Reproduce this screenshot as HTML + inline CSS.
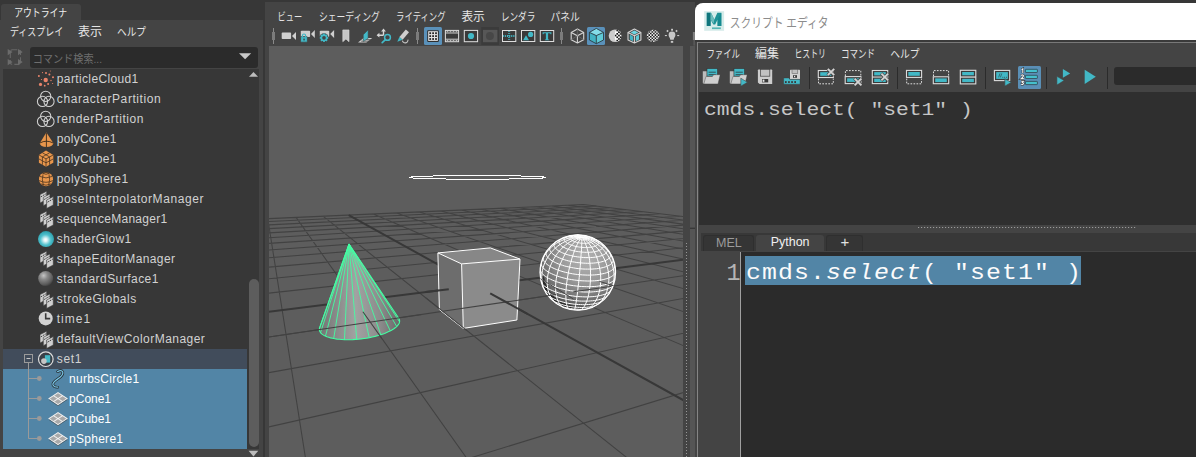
<!DOCTYPE html>
<html lang="ja">
<head>
<meta charset="utf-8">
<title>Maya - Outliner / Viewport / Script Editor</title>
<style>
html,body{margin:0;padding:0;}
body{width:1196px;height:457px;overflow:hidden;position:relative;background:#373737;
  font-family:"Liberation Sans",sans-serif;font-size:12px;color:#d2d2d2;}
.abs{position:absolute;}
/* ---------- outliner ---------- */
#ol-tab{left:1px;top:4px;width:80px;height:17px;background:#444;border-radius:3px 3px 0 0;}
#ol-panel{left:0;top:20px;width:263px;height:437px;background:#444;}
#ol-search{left:30px;top:47px;width:228px;height:21px;background:#2b2b2b;border-radius:3px;}
#ol-list{left:3px;top:69px;width:256px;height:380px;background:#373737;overflow:hidden;}
#ol-thumb{left:249px;top:279px;width:10px;height:168px;background:#5d5d5d;border-radius:5px;}
.row{position:absolute;left:0;width:244px;height:20px;line-height:20px;white-space:nowrap;}
.row span{position:absolute;top:0;letter-spacing:0;}
.row.hl{background:#414c5b;}
.row.sel{background:#5285a6;color:#fff;}
/* ---------- viewport ---------- */
#vp-panel{left:265px;top:2px;width:430px;height:455px;background:#444;}
#vp-strip{left:690px;top:46px;width:5.2px;height:411px;background:#555;}
#vp-view{left:269px;top:46px;width:414px;height:411px;background:#5d5d5d;overflow:hidden;}
/* ---------- script editor ---------- */
#se-win{left:695px;top:3px;width:501px;height:454px;background:#444;border-radius:8px 0 0 0;overflow:hidden;}
#se-title{left:0;top:0;width:501px;height:37px;background:#fff;}
#se-b1{left:0;top:37px;width:501px;height:2.3px;background:#3a3a3a;}
#se-b2{left:1.8px;top:39.3px;width:500px;height:1px;background:#787878;}
#se-lb{left:0;top:39px;width:2px;height:420px;background:#444;}
#se-lb2{left:1.8px;top:39.3px;width:1.4px;height:420px;background:#858585;}
#se-field{left:419px;top:64px;width:90px;height:18px;background:#2b2b2b;border-radius:3px;}
#se-hist{left:4px;top:89px;width:497px;height:132.7px;background:#2f2f2f;}
#se-hist span{position:absolute;left:5.2px;top:7px;font-family:"Liberation Mono",monospace;font-size:18.6px;letter-spacing:0;line-height:24px;color:#c6c6c6;white-space:pre;transform:scaleX(1.147);transform-origin:0 0;}
#se-tabs{left:6px;top:229.6px;width:495px;height:18.4px;background:#383838;}
.tab{position:absolute;top:2.6px;height:15.8px;line-height:15.4px;text-align:center;font-size:12.5px;border-radius:3px 3px 0 0;box-sizing:border-box;}
#se-gutter{left:3px;top:249px;width:42px;height:210px;background:#444;}
#se-gline{left:45px;top:249px;width:1px;height:210px;background:#a0a0a0;}
#se-code{left:46px;top:249px;width:455px;height:210px;background:#2b2b2b;}
#se-sel{left:50px;top:253px;width:336px;height:29px;background:#5285a6;}
.code{font-family:"Liberation Mono",monospace;font-size:21.6px;letter-spacing:0.953px;line-height:30px;white-space:pre;color:#fbfbfb;}
#se-ln{left:3px;top:255.5px;width:43.5px;text-align:right;color:#b4b4b4;font-size:23.5px;}
#se-txt{left:50.8px;top:254.6px;transform:scaleX(1.15);transform-origin:0 0;}
svg.layer{position:absolute;left:0;top:0;width:1196px;height:457px;pointer-events:none;overflow:visible;}
svg.layer text{font-family:"Liberation Sans","Noto Sans CJK JP",sans-serif;}
</style>
</head>
<body>

<!-- ================= OUTLINER ================= -->
<div class="abs" id="ol-tab"></div>
<div class="abs" id="ol-panel"></div>
<div class="abs" id="ol-search"></div>
<div class="abs" id="ol-list">
  <div class="row " style="top:0px"><span style="left:53.8px;letter-spacing:0.368px">particleCloud1</span></div>
  <div class="row " style="top:20px"><span style="left:53.8px;letter-spacing:0.580px">characterPartition</span></div>
  <div class="row " style="top:40px"><span style="left:53.8px;letter-spacing:0.570px">renderPartition</span></div>
  <div class="row " style="top:60px"><span style="left:53.8px;letter-spacing:0.278px">polyCone1</span></div>
  <div class="row " style="top:80px"><span style="left:53.8px;letter-spacing:0.278px">polyCube1</span></div>
  <div class="row " style="top:100px"><span style="left:53.8px;letter-spacing:0.391px">polySphere1</span></div>
  <div class="row " style="top:120px"><span style="left:53.8px;letter-spacing:0.568px">poseInterpolatorManager</span></div>
  <div class="row " style="top:140px"><span style="left:53.8px;letter-spacing:0.288px">sequenceManager1</span></div>
  <div class="row " style="top:160px"><span style="left:53.8px;letter-spacing:0.378px">shaderGlow1</span></div>
  <div class="row " style="top:180px"><span style="left:53.8px;letter-spacing:0.400px">shapeEditorManager</span></div>
  <div class="row " style="top:200px"><span style="left:53.8px;letter-spacing:0.458px">standardSurface1</span></div>
  <div class="row " style="top:220px"><span style="left:53.8px;letter-spacing:0.502px">strokeGlobals</span></div>
  <div class="row " style="top:240px"><span style="left:53.8px;letter-spacing:0.989px">time1</span></div>
  <div class="row " style="top:260px"><span style="left:53.8px;letter-spacing:0.461px">defaultViewColorManager</span></div>
  <div class="row hl" style="top:280px"><span style="left:53.8px;letter-spacing:0.638px">set1</span></div>
  <div class="row sel" style="top:300px"><span style="left:66.1px;letter-spacing:0.249px">nurbsCircle1</span></div>
  <div class="row sel" style="top:320px"><span style="left:66.1px;letter-spacing:-0.029px">pCone1</span></div>
  <div class="row sel" style="top:340px"><span style="left:66.1px;letter-spacing:-0.029px">pCube1</span></div>
  <div class="row sel" style="top:360px"><span style="left:66.1px;letter-spacing:0.265px">pSphere1</span></div>
</div>
<div class="abs" id="ol-thumb"></div>

<!-- ================= VIEWPORT ================= -->
<div class="abs" id="vp-panel"></div>
<div class="abs" id="vp-strip"></div>
<div class="abs" id="vp-view">
<svg width="414" height="411" viewBox="269 46 414 411" style="position:absolute;left:0;top:0">
<defs>
<linearGradient id="vpbg" x1="0" y1="0" x2="0" y2="1"><stop offset="0" stop-color="#5c5c5c"/><stop offset="1" stop-color="#5f5f5f"/></linearGradient>
</defs>
<path d="M-70.1 233.8L583.3 204.6M-70.1 233.8L-4536.4 1156.1M-94.3 238.8L596.2 206.1M-23.1 231.7L-3986.1 1156.9M-122.3 244.5L610.2 207.8M21.1 229.7L-3435.8 1157.7M-155.1 251.3L625.3 209.6M62.6 227.8L-2885.5 1158.5M-194.0 259.3L641.9 211.6M101.8 226.1L-2335.1 1159.3M-241.1 269.1L660.0 213.8M138.7 224.4L-1784.8 1160.1M-299.0 281.0L679.9 216.2M173.6 222.9L-1234.5 1160.9M-372.1 296.1L701.8 218.8M206.7 221.4L-684.2 1161.7M-467.3 315.8L726.2 221.7M238.0 220.0L-133.8 1162.6M-596.2 342.4L753.5 225.0M267.8 218.7L416.5 1163.4M-780.6 380.5L784.1 228.7M296.1 217.4L966.8 1164.2M-1066.5 439.5L818.8 232.9M323.0 216.2L1517.1 1165.0M-2685.1 773.8L904.1 243.1M373.2 214.0L2617.8 1166.6M-4113.8 1156.7L957.2 249.5M396.5 212.9L3168.1 1167.4M-2964.2 1158.4L1019.9 257.0M418.9 211.9L3718.4 1168.2M-1814.5 1160.1L1095.0 266.0M440.3 211.0L4268.8 1169.0M-664.8 1161.8L1186.6 277.0M460.8 210.1L4819.1 1169.8M484.9 1163.5L1300.7 290.7M480.5 209.2L5369.4 1170.7M1634.6 1165.2L1446.8 308.2M499.3 208.3L5919.7 1171.5M2784.3 1166.8L1640.6 331.5M517.5 207.5L6470.1 1172.3M3934.0 1168.5L1910.0 363.8M534.9 206.7L7020.4 1173.1M5083.7 1170.2L2310.0 411.9M551.6 206.0L6550.1 1033.1M6233.4 1171.9L2965.9 490.6M567.8 205.3L5058.6 781.7M7383.1 1173.6L4238.6 643.4M583.3 204.6L4238.6 643.4" stroke="#424242" stroke-width="1.05" fill="none"/>
<path d="M-1569.0 543.3L858.4 237.6M348.7 215.1L2067.5 1165.8" stroke="#383838" stroke-width="2" fill="none"/>
<defs>
<linearGradient id="gcone" x1="319" y1="0" x2="400" y2="0" gradientUnits="userSpaceOnUse">
<stop offset="0" stop-color="#737373"/><stop offset="0.45" stop-color="#a2a2a2"/><stop offset="0.75" stop-color="#8c8c8c"/><stop offset="1" stop-color="#686868"/></linearGradient>
<radialGradient id="gsph" cx="585" cy="258" r="56" gradientUnits="userSpaceOnUse">
<stop offset="0" stop-color="#b4b4b4"/><stop offset="0.45" stop-color="#989898"/><stop offset="0.8" stop-color="#6a6a6a"/><stop offset="1" stop-color="#2c2c2c"/></radialGradient>
<clipPath id="csph"><circle cx="577.8" cy="272.5" r="38"/></clipPath>
</defs>
<path d="M433 175h88v1h-88zM411 176h22v1h-22zM521 176h23v1h-23zM409 177h4v1h-4zM542 177h4v1h-4zM413 178h33v1h-33zM509 178h34v1h-34zM446 179h63v1h-63z" fill="#fff" shape-rendering="crispEdges"/>
<path d="M349.0 244.1L399.1 318.8L399.5 319.7L399.6 320.7L399.6 321.7L399.4 322.7L398.9 323.7L398.3 324.7L397.5 325.7L396.4 326.8L395.2 327.8L393.9 328.8L392.3 329.8L390.6 330.7L388.7 331.6L386.7 332.5L384.6 333.4L382.3 334.2L379.9 335.0L377.4 335.7L374.9 336.4L372.2 337.0L369.5 337.6L366.8 338.1L364.0 338.5L361.1 338.9L358.3 339.2L355.5 339.4L352.7 339.6L349.9 339.7L347.2 339.7L344.5 339.7L341.9 339.5L339.5 339.3L337.1 339.1L334.8 338.7L332.6 338.3L330.6 337.9L328.7 337.3L326.9 336.8L325.4 336.1L324.0 335.4L322.7 334.6L321.7 333.9L320.8 333.0L320.2 332.1L319.7 331.2L319.4 330.3L319.4 329.3L319.5 328.3Z" fill="url(#gcone)"/>
<path d="M349.0 244.1L399.6 321.9M349.0 244.1L396.7 326.5M349.0 244.1L390.3 330.9M349.0 244.1L380.8 334.7M349.0 244.1L369.2 337.6M349.0 244.1L356.7 339.3M349.0 244.1L344.5 339.7M349.0 244.1L333.7 338.6M349.0 244.1L325.5 336.1M349.0 244.1L320.5 332.7M349.0 244.1L319.4 328.5" stroke="#43ffa3" stroke-width="0.9" fill="none"/>
<path d="M349.0 244.1L399.1 318.8L399.5 319.7L399.6 320.7L399.6 321.7L399.4 322.7L398.9 323.7L398.3 324.7L397.5 325.7L396.4 326.8L395.2 327.8L393.9 328.8L392.3 329.8L390.6 330.7L388.7 331.6L386.7 332.5L384.6 333.4L382.3 334.2L379.9 335.0L377.4 335.7L374.9 336.4L372.2 337.0L369.5 337.6L366.8 338.1L364.0 338.5L361.1 338.9L358.3 339.2L355.5 339.4L352.7 339.6L349.9 339.7L347.2 339.7L344.5 339.7L341.9 339.5L339.5 339.3L337.1 339.1L334.8 338.7L332.6 338.3L330.6 337.9L328.7 337.3L326.9 336.8L325.4 336.1L324.0 335.4L322.7 334.6L321.7 333.9L320.8 333.0L320.2 332.1L319.7 331.2L319.4 330.3L319.4 329.3L319.5 328.3Z" stroke="#43ffa3" stroke-width="1.1" fill="none" stroke-linejoin="round"/>
<polygon points="437.9,252.9 490.3,247.9 520.0,259.1 461.6,263.9" fill="#878787"/>
<polygon points="437.9,252.9 461.6,263.9 463.3,328.4 439.4,309.6" fill="#6d6d6d"/>
<polygon points="461.6,263.9 520.0,259.1 516.9,320.0 463.3,328.4" fill="#8b8b8b"/>
<path d="M437.9,252.9 490.3,247.9 520.0,259.1 516.9,320.0 463.3,328.4 439.4,309.6Z M437.9,252.9 461.6,263.9 520.0,259.1 M461.6,263.9 463.3,328.4" stroke="#fff" stroke-width="1" fill="none" stroke-linejoin="round"/>
<circle cx="577.8" cy="272.5" r="38.0" fill="url(#gsph)"/>
<path d="M542.6 277.5A35.4 35.4 0 0 0 573.5 307.6" fill="none" stroke="#1c1c1c" stroke-width="3.2" stroke-linecap="round" opacity="0.75"/>
<path d="M573.5 310.0L574.7 310.2L575.9 310.3L577.1 310.3L578.3 310.3L579.4 310.3L580.6 310.3L581.7 310.2L582.7 310.2L583.7 310.0L584.7 309.9L585.6 309.7M561.8 307.0L562.7 307.4L563.6 307.7L564.5 308.1L565.6 308.4L566.6 308.7L567.7 309.0L568.8 309.3L570.0 309.5L571.1 309.7L572.3 309.9L573.5 310.0M573.6 309.0L575.2 309.1L576.7 309.2L578.3 309.3L579.8 309.4L581.3 309.4L582.7 309.3L584.2 309.2L585.5 309.1L586.9 308.9L588.1 308.7L589.3 308.5L590.4 308.2L591.5 307.9L592.4 307.6L593.3 307.2M554.9 302.8L555.6 303.4L556.5 303.9L557.5 304.5L558.5 305.0L559.6 305.5L560.8 306.0L562.0 306.4L563.3 306.9L564.7 307.3L566.1 307.6L567.6 308.0L569.1 308.3L570.6 308.5L572.1 308.8L573.6 309.0M573.9 307.0L575.7 307.2L577.6 307.3L579.4 307.4L581.3 307.5L583.1 307.5L584.8 307.4L586.5 307.3L588.2 307.1L589.8 307.0L591.3 306.7L592.7 306.4L594.1 306.1L595.3 305.7L596.5 305.3L597.5 304.8L598.5 304.4L599.3 303.8M549.8 298.2L550.5 298.9L551.3 299.6L552.2 300.3L553.3 300.9L554.4 301.6L555.6 302.2L557.0 302.8L558.4 303.4L559.9 303.9L561.5 304.4L563.1 304.9L564.8 305.4L566.6 305.8L568.3 306.2L570.2 306.5L572.0 306.8L573.9 307.0M574.2 304.2L576.3 304.4L578.5 304.5L580.6 304.6L582.7 304.7L584.7 304.7L586.7 304.6L588.7 304.5L590.6 304.3L592.4 304.1L594.1 303.8L595.8 303.5L597.3 303.1L598.7 302.7L600.1 302.2L601.3 301.7L602.3 301.1L603.3 300.5L604.1 299.9M546.0 293.3L546.7 294.1L547.4 294.9L548.4 295.7L549.4 296.5L550.6 297.2L551.9 298.0L553.3 298.7L554.9 299.4L556.5 300.0L558.2 300.7L560.0 301.2L561.9 301.8L563.8 302.3L565.8 302.8L567.9 303.2L570.0 303.6L572.1 303.9L574.2 304.2M574.6 300.6L577.0 300.8L579.3 301.0L581.6 301.1L583.9 301.1L586.2 301.1L588.4 301.1L590.6 300.9L592.6 300.8L594.6 300.5L596.5 300.2L598.4 299.8L600.1 299.4L601.6 298.9L603.1 298.4L604.4 297.8L605.6 297.2L606.7 296.6L607.5 295.9L608.3 295.1L608.9 294.4M542.6 286.8L543.0 287.7L543.6 288.6L544.3 289.5L545.1 290.3L546.2 291.2L547.3 292.1L548.6 292.9L550.1 293.7L551.6 294.5L553.3 295.3L555.1 296.0L557.0 296.7L559.0 297.3L561.0 298.0L563.2 298.5L565.4 299.0L567.6 299.5L569.9 299.9L572.3 300.3L574.6 300.6M575.1 296.3L577.6 296.5L580.1 296.7L582.6 296.8L585.0 296.9L587.5 296.9L589.8 296.8L592.1 296.7L594.3 296.5L596.5 296.2L598.5 295.9L600.4 295.5L602.3 295.0L604.0 294.5L605.5 294.0L606.9 293.4L608.2 292.7L609.3 292.0L610.3 291.3L611.0 290.5L611.7 289.7L612.1 288.8M540.7 280.7L540.9 281.6L541.4 282.5L542.0 283.5L542.7 284.4L543.6 285.4L544.7 286.3L546.0 287.2L547.4 288.1L548.9 289.0L550.6 289.8L552.4 290.6L554.3 291.4L556.3 292.1L558.4 292.8L560.6 293.5L562.9 294.1L565.3 294.6L567.7 295.1L570.1 295.6L572.6 295.9L575.1 296.3M575.6 291.4L578.3 291.6L580.9 291.8L583.4 292.0L586.0 292.0L588.5 292.0L590.9 292.0L593.3 291.8L595.6 291.6L597.9 291.3L600.0 291.0L602.0 290.6L603.9 290.1L605.6 289.6L607.2 289.0L608.7 288.4L610.0 287.7L611.2 287.0L612.2 286.2L613.0 285.4L613.6 284.5L614.1 283.6M539.9 275.2L540.2 276.2L540.6 277.1L541.2 278.1L542.0 279.1L543.0 280.1L544.1 281.0L545.4 282.0L546.8 282.9L548.4 283.8L550.2 284.7L552.0 285.5L554.0 286.3L556.1 287.1L558.3 287.8L560.6 288.5L563.0 289.1L565.4 289.7L567.9 290.2L570.5 290.7L573.1 291.0L575.6 291.4M576.3 286.0L578.9 286.3L581.5 286.5L584.1 286.6L586.7 286.7L589.3 286.7L591.7 286.6L594.2 286.5L596.5 286.3L598.7 286.0L600.9 285.6L602.9 285.2L604.8 284.8L606.6 284.2L608.2 283.6L609.7 283.0L611.1 282.3L612.2 281.6L613.2 280.8L614.1 279.9L614.7 279.1L615.2 278.2L615.5 277.3M540.0 268.7L540.1 269.6L540.4 270.6L540.8 271.6L541.4 272.6L542.2 273.6L543.2 274.6L544.3 275.5L545.6 276.5L547.1 277.4L548.7 278.4L550.5 279.2L552.4 280.1L554.4 280.9L556.5 281.7L558.7 282.4L561.0 283.1L563.4 283.7L565.9 284.3L568.4 284.8L571.0 285.3L573.6 285.7L576.3 286.0M576.9 280.3L579.5 280.6L582.1 280.8L584.7 280.9L587.2 281.0L589.8 281.0L592.2 280.9L594.6 280.8L596.9 280.6L599.1 280.3L601.2 280.0L603.2 279.6L605.1 279.1L606.9 278.6L608.5 278.0L610.0 277.3L611.3 276.7L612.4 275.9L613.4 275.2L614.2 274.3L614.9 273.5L615.4 272.6L615.6 271.7L615.7 270.8M541.2 262.3L541.1 263.2L541.2 264.2L541.4 265.1L541.9 266.1L542.5 267.1L543.3 268.1L544.2 269.0L545.4 270.0L546.7 270.9L548.1 271.9L549.7 272.8L551.4 273.6L553.3 274.5L555.3 275.3L557.4 276.1L559.6 276.8L561.9 277.5L564.2 278.1L566.7 278.7L569.2 279.2L571.7 279.6L574.3 280.0L576.9 280.3M577.6 274.5L580.1 274.7L582.6 274.9L585.1 275.0L587.5 275.1L589.9 275.1L592.3 275.0L594.6 274.9L596.8 274.7L599.0 274.4L601.0 274.1L602.9 273.7L604.7 273.3L606.4 272.8L608.0 272.2L609.4 271.6L610.7 270.9L611.8 270.2L612.7 269.5L613.5 268.7L614.1 267.9L614.6 267.0L614.9 266.1L615.0 265.2L614.9 264.3M543.5 256.2L543.2 257.1L543.1 258.0L543.2 258.9L543.4 259.8L543.8 260.8L544.4 261.7L545.2 262.6L546.1 263.6L547.2 264.5L548.5 265.4L549.8 266.3L551.4 267.2L553.0 268.0L554.8 268.8L556.7 269.6L558.8 270.4L560.9 271.0L563.1 271.7L565.4 272.3L567.7 272.8L570.1 273.3L572.6 273.8L575.1 274.2L577.6 274.5M578.2 268.6L580.6 268.8L582.9 269.0L585.3 269.1L587.6 269.1L589.8 269.1L592.1 269.1L594.2 268.9L596.3 268.8L598.3 268.5L600.2 268.2L602.0 267.8L603.7 267.4L605.3 266.9L606.7 266.4L608.1 265.8L609.3 265.2L610.3 264.6L611.2 263.9L611.9 263.1L612.5 262.4L612.9 261.6L613.2 260.7L613.3 259.9L613.2 259.0L613.0 258.2M546.7 250.6L546.3 251.4L546.1 252.2L546.0 253.1L546.0 253.9L546.3 254.8L546.6 255.7L547.2 256.6L547.9 257.5L548.8 258.3L549.8 259.2L551.0 260.1L552.3 260.9L553.7 261.7L555.3 262.5L556.9 263.3L558.7 264.0L560.6 264.7L562.6 265.3L564.7 266.0L566.8 266.5L569.0 267.0L571.3 267.5L573.6 267.9L575.9 268.3L578.2 268.6M578.9 262.7L581.0 262.9L583.2 263.1L585.3 263.2L587.4 263.3L589.4 263.3L591.4 263.2L593.4 263.1L595.3 262.9L597.1 262.7L598.8 262.4L600.5 262.1L602.0 261.7L603.5 261.3L604.8 260.8L606.0 260.3L607.1 259.7L608.0 259.1L608.8 258.5L609.5 257.8L610.0 257.1L610.4 256.4L610.6 255.6L610.7 254.9L610.7 254.1L610.5 253.3L610.1 252.5M550.8 245.8L550.3 246.5L549.9 247.2L549.7 247.9L549.6 248.7L549.7 249.5L549.9 250.3L550.2 251.1L550.7 251.9L551.4 252.7L552.2 253.5L553.1 254.2L554.1 255.0L555.3 255.8L556.6 256.5L558.0 257.2L559.6 257.9L561.2 258.6L562.9 259.2L564.7 259.8L566.6 260.4L568.5 260.9L570.5 261.3L572.6 261.8L574.7 262.1L576.8 262.5L578.9 262.7M579.5 257.1L581.4 257.3L583.3 257.5L585.1 257.6L587.0 257.6L588.7 257.6L590.5 257.6L592.2 257.5L593.9 257.3L595.5 257.1L597.0 256.9L598.4 256.6L599.8 256.2L601.0 255.9L602.2 255.4L603.2 255.0L604.2 254.5L605.0 254.0L605.7 253.4L606.3 252.8L606.7 252.2L607.1 251.6L607.3 250.9L607.4 250.3L607.3 249.6L607.1 248.9L606.8 248.2L606.4 247.5L605.8 246.8M556.3 241.2L555.6 241.7L555.0 242.3L554.5 242.9L554.2 243.6L554.0 244.2L553.9 244.9L554.0 245.6L554.2 246.2L554.5 246.9L554.9 247.6L555.5 248.3L556.2 249.0L557.0 249.7L557.9 250.4L558.9 251.1L560.1 251.7L561.3 252.3L562.6 252.9L564.1 253.5L565.6 254.1L567.1 254.6L568.8 255.1L570.5 255.5L572.2 255.9L574.0 256.3L575.8 256.6L577.7 256.9L579.5 257.1M580.1 251.9L581.7 252.1L583.2 252.2L584.8 252.3L586.3 252.3L587.8 252.3L589.2 252.3L590.7 252.2L592.0 252.1L593.4 251.9L594.6 251.7L595.8 251.5L596.9 251.2L598.0 250.9L598.9 250.5L599.8 250.1L600.6 249.7L601.3 249.3L601.9 248.8L602.4 248.4L602.7 247.9L603.0 247.3L603.2 246.8L603.3 246.2L603.2 245.7L603.1 245.1L602.8 244.5L602.4 243.9L602.0 243.3L601.4 242.8L600.7 242.2L600.0 241.6M563.2 237.4L562.3 237.8L561.5 238.2L560.8 238.7L560.2 239.1L559.7 239.6L559.4 240.1L559.1 240.6L558.9 241.2L558.8 241.7L558.9 242.3L559.0 242.9L559.3 243.5L559.7 244.0L560.1 244.6L560.7 245.2L561.4 245.8L562.1 246.3L563.0 246.9L564.0 247.4L565.0 247.9L566.1 248.5L567.3 248.9L568.5 249.4L569.8 249.8L571.2 250.2L572.6 250.6L574.1 250.9L575.5 251.2L577.1 251.5L578.6 251.7L580.1 251.9M580.7 247.2L581.9 247.4L583.1 247.4L584.3 247.5L585.4 247.5L586.6 247.5L587.7 247.5L588.8 247.4L589.9 247.3L590.9 247.2L591.9 247.1L592.8 246.9L593.6 246.7L594.5 246.4L595.2 246.1L595.9 245.9L596.5 245.5L597.0 245.2L597.5 244.8L597.8 244.5L598.1 244.1L598.4 243.7L598.5 243.3L598.5 242.8L598.5 242.4L598.4 242.0L598.2 241.5L597.9 241.1L597.5 240.6L597.1 240.2L596.6 239.7L596.0 239.3L595.3 238.9L594.6 238.4L593.8 238.0L592.9 237.6M570.9 235.1L570.0 235.3L569.1 235.5L568.3 235.8L567.6 236.0L566.9 236.3L566.3 236.6L565.7 237.0L565.3 237.3L564.9 237.7L564.6 238.1L564.4 238.5L564.3 238.9L564.2 239.4L564.3 239.8L564.4 240.2L564.6 240.7L564.9 241.1L565.2 241.6L565.7 242.0L566.2 242.5L566.8 242.9L567.4 243.3L568.2 243.8L569.0 244.2L569.8 244.5L570.7 244.9L571.7 245.3L572.7 245.6L573.8 245.9L574.9 246.2L576.0 246.5L577.1 246.7L578.3 246.9L579.5 247.1L580.7 247.2M581.1 243.2L582.0 243.2L582.8 243.3L583.6 243.3L584.4 243.4L585.2 243.4L585.9 243.3L586.7 243.3L587.4 243.2L588.1 243.1L588.8 243.0L589.4 242.9L590.0 242.8L590.5 242.6L591.0 242.4L591.5 242.2L591.9 242.0L592.3 241.8L592.6 241.5L592.8 241.3L593.0 241.0L593.2 240.7L593.3 240.5L593.3 240.2L593.3 239.9L593.2 239.6L593.1 239.3L592.9 238.9L592.6 238.6L592.3 238.3L592.0 238.0L591.6 237.7L591.1 237.5L590.6 237.2L590.1 236.9L589.5 236.6L588.9 236.4L588.2 236.1L587.5 235.9L586.8 235.7L586.1 235.5L585.3 235.3L584.5 235.2L583.7 235.0L582.9 234.9L582.1 234.8L581.3 234.7L580.5 234.7L579.7 234.6L578.9 234.6L578.1 234.6L577.3 234.6L576.6 234.7L575.8 234.7L575.1 234.8L574.5 234.9L573.9 235.0L573.3 235.2L572.7 235.4L572.2 235.5L571.8 235.7L571.3 235.9L571.0 236.2L570.7 236.4L570.4 236.7L570.2 236.9L570.1 237.2L570.0 237.5L569.9 237.8L570.0 238.1L570.0 238.4L570.2 238.7L570.4 239.0L570.6 239.3L570.9 239.6L571.3 239.9L571.7 240.2L572.1 240.5L572.6 240.8L573.2 241.1L573.8 241.3L574.4 241.6L575.0 241.8L575.7 242.0L576.4 242.3L577.2 242.5L577.9 242.6L578.7 242.8L579.5 242.9L580.3 243.1L581.1 243.2M581.5 239.8L581.9 239.8L582.3 239.9L582.8 239.9L583.2 239.9L583.6 239.9L583.9 239.9L584.3 239.9L584.7 239.8L585.0 239.8L585.4 239.7L585.7 239.7L586.0 239.6L586.3 239.5L586.5 239.4L586.8 239.3L587.0 239.2L587.2 239.1L587.3 239.0L587.4 238.9L587.5 238.7L587.6 238.6L587.7 238.4L587.7 238.3L587.7 238.1L587.6 238.0L587.6 237.8L587.5 237.7L587.3 237.5L587.2 237.4L587.0 237.2L586.8 237.1L586.6 236.9L586.3 236.8L586.0 236.6L585.7 236.5L585.4 236.4L585.1 236.2L584.8 236.1L584.4 236.0L584.0 235.9L583.6 235.8L583.2 235.8L582.8 235.7L582.4 235.6L582.0 235.6L581.6 235.5L581.2 235.5L580.8 235.5L580.4 235.5L580.0 235.5L579.6 235.5L579.2 235.5L578.8 235.5L578.5 235.6L578.2 235.6L577.8 235.7L577.5 235.8L577.3 235.9L577.0 235.9L576.8 236.0L576.6 236.2L576.4 236.3L576.2 236.4L576.1 236.5L576.0 236.7L575.9 236.8L575.9 236.9L575.9 237.1L575.9 237.2L575.9 237.4L576.0 237.5L576.1 237.7L576.2 237.9L576.4 238.0L576.5 238.2L576.7 238.3L577.0 238.5L577.2 238.6L577.5 238.7L577.8 238.9L578.1 239.0L578.4 239.1L578.8 239.2L579.1 239.3L579.5 239.4L579.9 239.5L580.3 239.6L580.7 239.7L581.1 239.8L581.5 239.8M574.3 310.3L574.4 310.1L574.6 309.7L574.8 309.1L575.0 308.2L575.3 307.1L575.5 305.8L575.8 304.3L576.1 302.6L576.4 300.7L576.7 298.7L577.0 296.5L577.3 294.1L577.6 291.6L577.9 289.0L578.2 286.2L578.6 283.4L578.9 280.6L579.2 277.6L579.5 274.7L579.7 271.7L580.0 268.7L580.3 265.8L580.5 262.9L580.7 260.1L580.9 257.3L581.1 254.6L581.3 252.1L581.5 249.6L581.6 247.3L581.7 245.2L581.8 243.2L581.8 241.4L581.8 239.8L581.8 238.4L581.8 237.3M578.7 310.5L579.7 310.3L580.7 310.0L581.7 309.3L582.6 308.5L583.5 307.4L584.4 306.2L585.2 304.7L586.0 303.0L586.8 301.1L587.4 299.1L588.1 296.9L588.6 294.5L589.1 292.0L589.5 289.4L589.9 286.7L590.2 283.9L590.4 281.0L590.5 278.1L590.5 275.1L590.5 272.1L590.4 269.1L590.2 266.2L589.9 263.2L589.6 260.4L589.2 257.6L588.7 254.9L588.2 252.3L587.5 249.9L586.9 247.5L586.1 245.4L585.4 243.4L584.5 241.5L583.7 239.9L582.8 238.5L581.8 237.3M584.5 309.9L586.2 309.5L587.8 308.8L589.4 307.9L590.9 306.8L592.3 305.4L593.7 303.9L594.9 302.2L596.1 300.3L597.1 298.2L598.0 296.0L598.8 293.6L599.5 291.1L600.0 288.4L600.4 285.7L600.6 282.9L600.7 280.0L600.7 277.1L600.5 274.2L600.2 271.2L599.7 268.3L599.1 265.4L598.4 262.5L597.6 259.7L596.6 256.9L595.5 254.3L594.3 251.8L593.0 249.4L591.6 247.1L590.1 245.0L588.6 243.1L587.0 241.3L585.3 239.8L583.6 238.4L581.8 237.3M592.7 307.5L594.8 306.4L596.8 305.2L598.6 303.7L600.4 302.1L602.0 300.3L603.4 298.3L604.7 296.1L605.9 293.8L606.8 291.4L607.6 288.9L608.2 286.2L608.6 283.5L608.8 280.7L608.9 277.8L608.7 274.9L608.4 272.0L607.8 269.2L607.1 266.3L606.2 263.4L605.1 260.7L603.8 258.0L602.4 255.3L600.9 252.8L599.2 250.4L597.3 248.2L595.4 246.1L593.3 244.1L591.1 242.4L588.9 240.8L586.6 239.4L584.2 238.2L581.8 237.3M604.6 299.4L606.5 297.4L608.1 295.3L609.6 293.1L610.9 290.7L611.9 288.2L612.8 285.6L613.4 282.9L613.9 280.2L614.1 277.4L614.1 274.5L613.8 271.7L613.3 268.9L612.7 266.1L611.8 263.3L610.7 260.6L609.3 258.0L607.8 255.4L606.1 253.0L604.3 250.7L602.3 248.5L600.1 246.4L597.8 244.6L595.3 242.9L592.8 241.3L590.1 240.0L587.4 238.9L584.6 238.0L581.8 237.3M615.7 270.5L615.5 267.8L615.0 265.0L614.2 262.3L613.3 259.7L612.1 257.1L610.7 254.7L609.1 252.3L607.4 250.1L605.4 248.0L603.3 246.1L601.0 244.3L598.5 242.7L596.0 241.3L593.3 240.1L590.5 239.1L587.7 238.2L584.8 237.6L581.8 237.3M606.0 247.0L604.1 245.2L602.1 243.5L599.9 242.0L597.6 240.7L595.2 239.6L592.7 238.7L590.1 238.0L587.4 237.6L584.6 237.3L581.8 237.3M597.1 239.7L595.1 238.7L593.1 238.0L591.0 237.4L588.8 237.0L586.5 236.9L584.2 237.0L581.8 237.3M589.9 236.5L588.4 236.2L586.8 236.1L585.2 236.3L583.5 236.7L581.8 237.3M585.8 235.4L585.1 235.3L584.3 235.4L583.5 235.8L582.7 236.4L581.8 237.3M581.5 234.7L581.6 235.0L581.7 235.5L581.8 236.3L581.8 237.3M576.9 234.5L577.9 234.6L578.9 234.9L579.9 235.5L580.9 236.2L581.8 237.3M571.1 235.1L572.9 234.9L574.6 234.9L576.4 235.1L578.2 235.6L580.0 236.3L581.8 237.3M562.9 237.5L565.1 236.7L567.4 236.1L569.7 235.7L572.1 235.6L574.5 235.7L576.9 236.0L579.4 236.5L581.8 237.3M549.1 247.6L551.0 245.6L553.0 243.8L555.1 242.2L557.4 240.7L559.8 239.5L562.4 238.4L565.0 237.6L567.7 237.0L570.5 236.6L573.3 236.4L576.1 236.5L579.0 236.8L581.8 237.3M539.9 274.5L539.8 271.7L540.0 268.9L540.4 266.2L541.1 263.4L542.0 260.8L543.1 258.2L544.4 255.7L546.0 253.3L547.7 251.0L549.6 248.9L551.7 246.9L553.9 245.0L556.3 243.4L558.8 241.9L561.5 240.6L564.2 239.5L567.1 238.6L569.9 237.9L572.9 237.4L575.9 237.1L578.8 237.1L581.8 237.3M549.6 298.0L548.0 296.0L546.5 293.9L545.2 291.6L544.1 289.2L543.2 286.8L542.5 284.2L542.1 281.5L541.8 278.8L541.8 276.1L542.0 273.3L542.4 270.6L543.1 267.8L543.9 265.1L545.0 262.4L546.3 259.8L547.7 257.2L549.4 254.8L551.2 252.5L553.2 250.2L555.3 248.2L557.6 246.2L560.0 244.5L562.5 242.9L565.1 241.5L567.8 240.3L570.6 239.2L573.3 238.4L576.2 237.8L579.0 237.4L581.8 237.3M558.5 305.3L556.7 304.1L555.1 302.7L553.5 301.1L552.1 299.3L550.9 297.4L549.9 295.3L549.0 293.1L548.3 290.8L547.7 288.3L547.4 285.8L547.2 283.1L547.3 280.4L547.5 277.7L547.9 274.9L548.5 272.1L549.3 269.3L550.2 266.5L551.3 263.8L552.6 261.1L554.1 258.5L555.6 256.0L557.4 253.5L559.2 251.2L561.2 249.1L563.2 247.0L565.4 245.1L567.6 243.4L569.9 241.9L572.3 240.6L574.6 239.4L577.0 238.5L579.4 237.8L581.8 237.3M564.3 308.0L563.0 307.3L561.7 306.3L560.6 305.2L559.5 303.8L558.6 302.2L557.8 300.5L557.1 298.6L556.5 296.5L556.1 294.3L555.8 292.0L555.6 289.5L555.6 286.9L555.7 284.2L555.9 281.5L556.3 278.7L556.8 275.9L557.5 273.0L558.3 270.2L559.1 267.3L560.1 264.5L561.3 261.8L562.5 259.1L563.8 256.5L565.2 253.9L566.7 251.5L568.2 249.3L569.8 247.2L571.5 245.2L573.1 243.4L574.9 241.8L576.6 240.3L578.3 239.1L580.1 238.1L581.8 237.3M569.8 309.6L569.1 309.3L568.5 308.8L567.9 308.0L567.4 307.1L567.0 305.9L566.6 304.5L566.3 302.9L566.1 301.1L565.9 299.2L565.9 297.0L565.8 294.8L565.9 292.4L566.0 289.8L566.3 287.2L566.5 284.5L566.9 281.7L567.3 278.8L567.8 275.9L568.3 273.0L568.9 270.1L569.6 267.2L570.3 264.3L571.1 261.5L571.8 258.7L572.7 256.0L573.5 253.5L574.4 251.0L575.3 248.7L576.3 246.5L577.2 244.5L578.1 242.7L579.1 241.0L580.0 239.6L580.9 238.3L581.8 237.3" stroke="#fff" stroke-width="1" fill="none" clip-path="url(#csph)"/>
<circle cx="577.8" cy="272.5" r="37.7" fill="none" stroke="#fff" stroke-width="1.3"/>
<path d="M267.5 337.2L422.0 314.4M362.9 311.8L381.6 338.1M442.7 311.3L556.0 294.6M425.8 297.9L466.7 330.4" stroke="#424242" stroke-width="1.05" fill="none"/>
<path d="M490.2 293.3L527.6 314.0M425.5 292.1L448.8 289.2" stroke="#383838" stroke-width="2" fill="none"/>
<path d="M540.5 278.7L573.3 298.9M573.3 291.8L611.6 286.3M599.5 281.4L613.7 285.8" stroke="#454545" stroke-width="1" fill="none"/>
</svg>
</div>

<!-- ================= SCRIPT EDITOR ================= -->
<div class="abs" id="se-win">
  <div class="abs" id="se-title"></div>
  <div class="abs" id="se-b1"></div>
  <div class="abs" id="se-b2"></div>
  <div class="abs" id="se-lb"></div>
  <div class="abs" id="se-lb2"></div>
  <div class="abs" id="se-field"></div>
  <div class="abs" id="se-hist"><span>cmds.select( "set1" )</span></div>
  <div class="abs" id="se-tabs">
    <div class="tab" style="left:2.3px;width:51.2px;background:#353535;border:1px solid #2f2f2f;border-bottom:none;color:#9c9c9c;">MEL</div>
    <div class="tab" style="left:55px;width:68.2px;background:#444;color:#f0f0f0;">Python</div>
    <div class="tab" style="left:125.2px;width:37.2px;background:#353535;border:1px solid #2f2f2f;border-bottom:none;color:#e2e2e2;font-size:15px;line-height:12.5px;">+</div>
  </div>
  <div class="abs" id="se-gutter"></div>
  <div class="abs" id="se-gline"></div>
  <div class="abs" id="se-code"></div>
  <div class="abs" id="se-sel"></div>
  <div class="abs code" id="se-ln">1</div>
  <div class="abs code" id="se-txt">cmds.<i>select</i>( "set1" )</div>
</div>

<!-- ================= vector overlay: Japanese labels + icons ================= -->
<svg class="layer" viewBox="0 0 1196 457">
<!-- outliner -->
<text x="14.2" y="17" font-size="11" fill="#eeeeee" textLength="52.8" lengthAdjust="spacingAndGlyphs">アウトライナ</text>
<text x="10" y="36.2" font-size="11" fill="#e6e6e6" textLength="53.2" lengthAdjust="spacingAndGlyphs">ディスプレイ</text>
<text x="78" y="36.4" font-size="12" fill="#e6e6e6" textLength="24" lengthAdjust="spacingAndGlyphs">表示</text>
<text x="117" y="36.2" font-size="11" fill="#e6e6e6" textLength="29" lengthAdjust="spacingAndGlyphs">ヘルプ</text>
<text x="32.7" y="63.2" font-size="11" fill="#6e6e6e" textLength="69.3" lengthAdjust="spacingAndGlyphs">コマンド検索...</text>
<path d="M239 53.2H251.2L245.1 59.2Z" fill="#c8c8c8"/>
<path d="M249 76.8H258L253.5 72Z" fill="#bdbdbd"/>
<path d="M248.6 450.8H258.3L253.45 456.4Z" fill="#bdbdbd"/>
<g id="ol-search-icon">
<rect x="10.3" y="49.8" width="10.2" height="14.6" rx="2" fill="none" stroke="#666" stroke-width="1.1" stroke-dasharray="5 2.2"/>
<path d="M7.7 49L12.6 52.1L7.7 55.2ZM18 49L22.7 52.1L18 55.2ZM7.7 59L12.6 62.1L7.7 65.2ZM18 59L22.7 62.1L18 65.2Z" fill="#6b6b6b"/>
</g>
<g fill="#e8836a"><circle cx="45.7" cy="80" r="2.2"/><circle cx="38.9" cy="76.1" r="1.0"/><circle cx="46" cy="73" r="1.0"/><circle cx="49.4" cy="74.5" r="1.0"/><circle cx="53" cy="77.2" r="1.0"/><circle cx="40.5" cy="84.4" r="1.6"/><circle cx="44.7" cy="85.7" r="0.9"/><circle cx="48.1" cy="84" r="1.0"/><circle cx="51" cy="80.5" r="0.7"/><circle cx="52.6" cy="83.5" r="0.6"/><circle cx="42.5" cy="72.6" r="0.6"/><circle cx="41.5" cy="79.5" r="0.6"/><circle cx="50.3" cy="70.9" r="0.5"/></g>
<g fill="none" stroke="#d2d2d2" stroke-width="1.05"><circle cx="45.7" cy="96.3" r="5.1"/><circle cx="42.5" cy="101.4" r="5.1"/><circle cx="49" cy="101.4" r="5.1"/></g>
<g fill="none" stroke="#d2d2d2" stroke-width="1.05"><circle cx="45.7" cy="116.3" r="5.1"/><circle cx="42.5" cy="121.4" r="5.1"/><circle cx="49" cy="121.4" r="5.1"/></g>
<g><path d="M46.4 132.4L53.4 143.2Q52.6 146.6 46.4 147Q40.4 146.6 39.7 143.2Z" fill="#e8964c"/>
<path d="M46.4 133V147M39.9 143Q46.4 139.4 53.2 143" stroke="#3a2a1a" stroke-width="0.9" fill="none"/></g>
<g><path d="M46 150.6L53.3 154.9V162.8L46 166.7L38.9 162.8V154.9Z" fill="#e8964c"/>
<path d="M38.9 154.9L46 158.9L53.3 154.9M46 158.9V166.7M42.4 152.8L49.6 156.9V164.8M49.6 152.8L42.4 156.9V164.8M38.9 158.9L46 162.8L53.3 158.9" stroke="#4a3420" stroke-width="0.8" fill="none"/></g>
<g><circle cx="46" cy="179.2" r="7" fill="#e8964c"/>
<path d="M39.6 176.4Q46 179.4 52.4 176.4M39.2 180.6Q46 184 52.8 180.6M41 184Q46 186.4 51 184M42.6 173.2Q46 171.6 49.4 173.2Q46 175.4 42.6 173.2M43 174.4Q41.6 179.5 43.4 185.6M49 174.4Q50.4 179.5 48.6 185.6" stroke="#4a3420" stroke-width="0.8" fill="none"/></g>
<g fill="#cfcfcf" stroke="#373737" stroke-width="0.6"><path d="M40 194.6L46.7 191.2V199.6L40 203.0Z"/><path d="M40.9 196.79999999999998L46.300000000000004 193.6" stroke="#3c3c3c" stroke-width="1" stroke-dasharray="1.6 0.9" fill="none"/><path d="M43.3 197.3L50.0 193.9V202.3L43.3 205.70000000000002Z"/><path d="M44.199999999999996 199.5L49.6 196.3" stroke="#3c3c3c" stroke-width="1" stroke-dasharray="1.6 0.9" fill="none"/><path d="M46.6 200.0L53.300000000000004 196.6V205.0L46.6 208.4Z"/><path d="M47.5 202.2L52.900000000000006 199.0" stroke="#3c3c3c" stroke-width="1" stroke-dasharray="1.6 0.9" fill="none"/></g>
<g fill="#cfcfcf" stroke="#373737" stroke-width="0.6"><path d="M40 214.6L46.7 211.2V219.6L40 223.0Z"/><path d="M40.9 216.79999999999998L46.300000000000004 213.6" stroke="#3c3c3c" stroke-width="1" stroke-dasharray="1.6 0.9" fill="none"/><path d="M43.3 217.3L50.0 213.9V222.3L43.3 225.70000000000002Z"/><path d="M44.199999999999996 219.5L49.6 216.3" stroke="#3c3c3c" stroke-width="1" stroke-dasharray="1.6 0.9" fill="none"/><path d="M46.6 220.0L53.300000000000004 216.6V225.0L46.6 228.4Z"/><path d="M47.5 222.2L52.900000000000006 219.0" stroke="#3c3c3c" stroke-width="1" stroke-dasharray="1.6 0.9" fill="none"/></g>
<g fill="#cfcfcf" stroke="#373737" stroke-width="0.6"><path d="M40 254.6L46.7 251.2V259.6L40 263.0Z"/><path d="M40.9 256.79999999999995L46.300000000000004 253.6" stroke="#3c3c3c" stroke-width="1" stroke-dasharray="1.6 0.9" fill="none"/><path d="M43.3 257.3L50.0 253.9V262.3L43.3 265.70000000000005Z"/><path d="M44.199999999999996 259.5L49.6 256.3" stroke="#3c3c3c" stroke-width="1" stroke-dasharray="1.6 0.9" fill="none"/><path d="M46.6 260.0L53.300000000000004 256.6V265.0L46.6 268.4Z"/><path d="M47.5 262.2L52.900000000000006 259.0" stroke="#3c3c3c" stroke-width="1" stroke-dasharray="1.6 0.9" fill="none"/></g>
<g fill="#cfcfcf" stroke="#373737" stroke-width="0.6"><path d="M40 294.6L46.7 291.2V299.6L40 303.0Z"/><path d="M40.9 296.79999999999995L46.300000000000004 293.6" stroke="#3c3c3c" stroke-width="1" stroke-dasharray="1.6 0.9" fill="none"/><path d="M43.3 297.3L50.0 293.9V302.3L43.3 305.70000000000005Z"/><path d="M44.199999999999996 299.5L49.6 296.3" stroke="#3c3c3c" stroke-width="1" stroke-dasharray="1.6 0.9" fill="none"/><path d="M46.6 300.0L53.300000000000004 296.6V305.0L46.6 308.4Z"/><path d="M47.5 302.2L52.900000000000006 299.0" stroke="#3c3c3c" stroke-width="1" stroke-dasharray="1.6 0.9" fill="none"/></g>
<g fill="#cfcfcf" stroke="#373737" stroke-width="0.6"><path d="M40 334.6L46.7 331.2V339.6L40 343.0Z"/><path d="M40.9 336.79999999999995L46.300000000000004 333.6" stroke="#3c3c3c" stroke-width="1" stroke-dasharray="1.6 0.9" fill="none"/><path d="M43.3 337.3L50.0 333.9V342.3L43.3 345.70000000000005Z"/><path d="M44.199999999999996 339.5L49.6 336.3" stroke="#3c3c3c" stroke-width="1" stroke-dasharray="1.6 0.9" fill="none"/><path d="M46.6 340.0L53.300000000000004 336.6V345.0L46.6 348.4Z"/><path d="M47.5 342.2L52.900000000000006 339.0" stroke="#3c3c3c" stroke-width="1" stroke-dasharray="1.6 0.9" fill="none"/></g>
<defs><radialGradient id="gglow" cx="0.47" cy="0.55" r="0.55"><stop offset="0" stop-color="#ffffff"/><stop offset="0.18" stop-color="#e4f6f8"/><stop offset="0.6" stop-color="#4fc0cc"/><stop offset="1" stop-color="#2c9eab"/></radialGradient>
<radialGradient id="gstd" cx="0.36" cy="0.3" r="0.75"><stop offset="0" stop-color="#c4c4c4"/><stop offset="0.35" stop-color="#8a8a8a"/><stop offset="0.8" stop-color="#5a5a5a"/><stop offset="1" stop-color="#3c3c3c"/></radialGradient></defs>
<circle cx="46" cy="239.1" r="8" fill="url(#gglow)"/>
<circle cx="45.7" cy="278.6" r="7.5" fill="url(#gstd)"/>
<circle cx="45.7" cy="318.4" r="7" fill="#d2d2d2"/><path d="M45.7 313.2V318.6H50.2" stroke="#3a3a3a" stroke-width="1.6" fill="none"/>
<g id="ol-tree">
<rect x="24.5" y="354.5" width="8" height="8" fill="none" stroke="#9a9a9a" stroke-width="1"/>
<path d="M26.5 358.5H30.5" stroke="#c8c8c8" stroke-width="1"/>
<path d="M28.5 363V438.5M28.5 378.5H38M28.5 398.5H38M28.5 418.5H38M28.5 438.5H38" stroke="#9a9a9a" stroke-width="1" fill="none"/>
<g fill="#9a9a9a"><circle cx="39.3" cy="378.5" r="2.4"/><circle cx="39.3" cy="398.5" r="2.4"/><circle cx="39.3" cy="418.5" r="2.4"/><circle cx="39.3" cy="438.5" r="2.4"/></g>
</g>
<circle cx="45.8" cy="359.2" r="7.3" fill="#3a3f48" stroke="#dcdcdc" stroke-width="1.2"/>
<rect x="44.9" y="355.2" width="5.3" height="7.4" fill="#42b8c6"/>
<circle cx="43.9" cy="361.1" r="2.8" fill="#c4c4c4"/>
<path d="M57.6 371.6Q61.4 369.4 62.8 372Q63.6 375 58.2 378.6Q52 382.6 53 385Q54.2 387.4 57.8 387.2" fill="none" stroke="#222" stroke-width="2.6" stroke-linecap="round"/>
<path d="M57.6 371.6Q61.4 369.4 62.8 372Q63.6 375 58.2 378.6Q52 382.6 53 385Q54.2 387.4 57.8 387.2" fill="none" stroke="#76c3e4" stroke-width="1.3" stroke-linecap="round"/>
<g><path d="M48.9 398.6L58 392.6L67.2 398.6L58 404.70000000000005Z" fill="#a9a9a9" stroke="#f2f2f2" stroke-width="1.1" stroke-linejoin="round"/><path d="M53.45 395.6L62.6 401.65000000000003M62.6 395.6L53.45 401.65000000000003" stroke="#f2f2f2" stroke-width="1.1"/><path d="M48.9 398.6L58 404.70000000000005L67.2 398.6" fill="none" stroke="#2e2e2e" stroke-width="0.5" transform="translate(0 0.9)"/></g>
<g><path d="M48.9 418.6L58 412.6L67.2 418.6L58 424.70000000000005Z" fill="#a9a9a9" stroke="#f2f2f2" stroke-width="1.1" stroke-linejoin="round"/><path d="M53.45 415.6L62.6 421.65000000000003M62.6 415.6L53.45 421.65000000000003" stroke="#f2f2f2" stroke-width="1.1"/><path d="M48.9 418.6L58 424.70000000000005L67.2 418.6" fill="none" stroke="#2e2e2e" stroke-width="0.5" transform="translate(0 0.9)"/></g>
<g><path d="M48.9 438.6L58 432.6L67.2 438.6L58 444.70000000000005Z" fill="#a9a9a9" stroke="#f2f2f2" stroke-width="1.1" stroke-linejoin="round"/><path d="M53.45 435.6L62.6 441.65000000000003M62.6 435.6L53.45 441.65000000000003" stroke="#f2f2f2" stroke-width="1.1"/><path d="M48.9 438.6L58 444.70000000000005L67.2 438.6" fill="none" stroke="#2e2e2e" stroke-width="0.5" transform="translate(0 0.9)"/></g>
<!-- viewport menu -->
<text x="277.6" y="20.6" font-size="11" fill="#e6e6e6" textLength="24.7" lengthAdjust="spacingAndGlyphs">ビュー</text>
<text x="319" y="20.6" font-size="11" fill="#e6e6e6" textLength="60.8" lengthAdjust="spacingAndGlyphs">シェーディング</text>
<text x="396.1" y="20.6" font-size="11" fill="#e6e6e6" textLength="49.5" lengthAdjust="spacingAndGlyphs">ライティング</text>
<text x="461.4" y="20.6" font-size="12" fill="#e6e6e6" textLength="23.4" lengthAdjust="spacingAndGlyphs">表示</text>
<text x="500.9" y="20.6" font-size="11" fill="#e6e6e6" textLength="34.4" lengthAdjust="spacingAndGlyphs">レンダラ</text>
<text x="550.4" y="20.6" font-size="11" fill="#e6e6e6" textLength="29.4" lengthAdjust="spacingAndGlyphs">パネル</text>
<g id="vp-toolbar">
<!-- separators -->
<g fill="#8a8a8a">
<rect x="273" y="28" width="1" height="16"/><rect x="272" y="32" width="3" height="8" fill="#7c7c7c"/>
<rect x="417" y="28" width="1" height="16"/><rect x="416" y="32" width="3" height="8" fill="#7c7c7c"/>
<rect x="561" y="28" width="1" height="16"/><rect x="560" y="32" width="3" height="8" fill="#7c7c7c"/>
</g>
<!-- camera -->
<rect x="281.7" y="32.6" width="9.4" height="6.4" rx="0.8" fill="#cfcfcf"/>
<path d="M292 36L296 31.9V40Z" fill="#cfcfcf"/>
<!-- camera lock -->
<rect x="300.8" y="30.7" width="9.3" height="6.3" rx="0.8" fill="#cfcfcf"/>
<path d="M311 34L314.8 29.9V38Z" fill="#cfcfcf"/>
<rect x="300.6" y="36.6" width="6.8" height="5.6" rx="0.8" fill="#42b8c6" stroke="#444" stroke-width="0.8"/>
<path d="M302.4 37V35.6A1.6 1.6 0 0 1 305.6 35.6V37" fill="none" stroke="#42b8c6" stroke-width="1.2"/>
<rect x="303.4" y="38.6" width="1.3" height="1.8" fill="#3a3a3a"/>
<!-- camera attributes (gear) -->
<rect x="319.8" y="30.7" width="9.4" height="6.3" rx="0.8" fill="#cfcfcf"/>
<path d="M330.2 34L334.1 29.9V38Z" fill="#cfcfcf"/>
<circle cx="324" cy="37.8" r="4.6" fill="#444"/>
<circle cx="324" cy="37.8" r="2.7" fill="none" stroke="#42b8c6" stroke-width="1.7"/>
<g stroke="#42b8c6" stroke-width="1.7">
<path d="M324 33.6V35.2M324 40.4V42M319.8 37.8H321.4M326.6 37.8H328.2M321 34.8L322.2 36M325.8 39.6L327 40.8M327 34.8L325.8 36M322.2 39.6L321 40.8"/>
</g>
<!-- bookmark -->
<path d="M342.8 29.9H349V41.7L345.9 39L342.8 41.7Z" fill="#c6c6c6" stroke="#dcdcdc" stroke-width="0.6"/>
<!-- image plane -->
<path d="M358 42.6L363.6 37.9H372.2L366.4 42.6Z" fill="#d0d0d0"/>
<path d="M361.2 41.2H369M363 39.6H370.6" stroke="#444" stroke-width="0.7"/>
<path d="M363.3 34.7L368.1 29.9V38.4L363.3 41.5Z" fill="#42b8c6" stroke="#444" stroke-width="0.5"/>
<!-- 2D pan/zoom -->
<path d="M383.5 35.2V30.2M377.8 35.2H383.5" stroke="#d6d6d6" stroke-width="1.4" fill="none"/>
<path d="M383.5 28.6L385.9 31.4H381.1Z M376.6 35.2L379.4 32.8V37.6Z" fill="#d6d6d6"/>
<circle cx="387.5" cy="37.4" r="2.9" fill="none" stroke="#42b8c6" stroke-width="1.5"/>
<path d="M385.4 39.6L382.2 42.6" stroke="#42b8c6" stroke-width="1.7" stroke-linecap="round"/>
<!-- grease pencil -->
<path d="M405.8 29.4L409 32.2L402.6 39.8L399.4 37Z" fill="#cfcfcf"/>
<path d="M399.4 37L402.6 39.8L397.3 41.8Z" fill="#42b8c6"/>
<path d="M402.4 40.6A2.7 2.7 0 1 0 407.9 39.6" fill="none" stroke="#c4c4c4" stroke-width="1.1"/>
<!-- grid toggle (on) -->
<rect x="424" y="27" width="18" height="18" rx="1.5" fill="#5a91ba"/>
<rect x="427.2" y="30.2" width="11.7" height="11.7" rx="0.8" fill="#2f2f2f"/>
<rect x="428.2" y="31.2" width="9.7" height="9.7" fill="#e4e4e4"/>
<g fill="#262626">
<rect x="429.3" y="32.3" width="1.8" height="1.8"/><rect x="432.2" y="32.3" width="1.8" height="1.8"/><rect x="435.1" y="32.3" width="1.8" height="1.8"/>
<rect x="429.3" y="35.2" width="1.8" height="1.8"/><rect x="432.2" y="35.2" width="1.8" height="1.8"/><rect x="435.1" y="35.2" width="1.8" height="1.8"/>
<rect x="429.3" y="38.1" width="1.8" height="1.8"/><rect x="432.2" y="38.1" width="1.8" height="1.8"/><rect x="435.1" y="38.1" width="1.8" height="1.8"/>
</g>
<!-- film gate -->
<rect x="445.4" y="30.4" width="13.2" height="11.3" fill="#3a3a3a" stroke="#dedede" stroke-width="1"/>
<path d="M446 33H458M446 39.2H458" stroke="#dedede" stroke-width="0.9"/>
<path d="M446.6 31.7H458" stroke="#dedede" stroke-width="0.9" stroke-dasharray="1.8 1.2"/>
<path d="M446.6 40.4H458" stroke="#dedede" stroke-width="0.9" stroke-dasharray="1.8 1.2"/>
<!-- resolution gate -->
<rect x="464.3" y="30.4" width="13.3" height="11.3" fill="#3a3a3a" stroke="#dedede" stroke-width="1"/>
<circle cx="471" cy="36" r="3.1" fill="#42b8c6"/>
<!-- gate mask (off/dim) -->
<rect x="481.3" y="27" width="17.6" height="18" fill="#3b3b3b"/>
<rect x="483" y="29.9" width="14.4" height="12.3" fill="#575757"/>
<circle cx="489.9" cy="36" r="4" fill="#474747"/>
<!-- field chart -->
<rect x="502.5" y="30.5" width="13.3" height="11" fill="#3a3a3a" stroke="#dedede" stroke-width="1"/>
<path d="M503.2 36H515.2" stroke="#42b8c6" stroke-width="2.2" stroke-dasharray="1 0.9"/>
<path d="M509.1 31.2V40.8" stroke="#42b8c6" stroke-width="2.2" stroke-dasharray="0.9 1.1"/>
<!-- safe action -->
<rect x="521.5" y="30.5" width="13.3" height="11" fill="#3a3a3a" stroke="#dedede" stroke-width="1"/>
<path d="M523.1 40.2H529L526 35.2Z" fill="#42b8c6"/>
<circle cx="530.6" cy="34.4" r="2.6" fill="#42b8c6"/>
<!-- safe title -->
<rect x="540.3" y="30.5" width="13.4" height="11" fill="#3a3a3a" stroke="#dedede" stroke-width="1"/>
<path d="M542.6 32.2H551.4V34.2H550.6Q550.4 33.3 549.4 33.3H548.1V39Q548.1 39.6 549.2 39.7V40.2H544.8V39.7Q545.9 39.6 545.9 39V33.3H544.6Q543.6 33.3 543.4 34.2H542.6Z" fill="#42b8c6"/>
<!-- wireframe cube -->
<g fill="none" stroke="#d4d4d4" stroke-width="1.1" stroke-linejoin="round">
<path d="M577.4 29L583.7 32.4V39.7L577.4 43L571.2 39.7V32.4Z"/>
<path d="M577.4 35.8V43M577.4 35.8L571.2 32.4M577.4 35.8L583.7 32.4"/>
<path d="M577.4 29V35.8M571.2 39.7L577.4 35.8L583.7 39.7" stroke="#6d6d6d" stroke-width="0.7"/>
</g>
<!-- shaded cube (on) -->
<rect x="587" y="27" width="18" height="18" rx="1.5" fill="#5a91ba"/>
<path d="M596.3 28.4L603.5 32.4L596.3 35.6L589.4 32.4Z" fill="#84dde8"/>
<path d="M589.4 32.4L596.3 35.6V43.7L589.4 40Z" fill="#43b3c3"/>
<path d="M603.5 32.4L596.3 35.6V43.7L603.5 40Z" fill="#5fcad6"/>
<path d="M596.3 28.4L603.5 32.4V40L596.3 43.7L589.4 40V32.4ZM589.4 32.4L596.3 35.6L603.5 32.4M596.3 35.6V43.7" fill="none" stroke="#2b3b42" stroke-width="0.9" stroke-linejoin="round"/>
<!-- half shaded sphere -->
<circle cx="615" cy="35.7" r="6.3" fill="#cdcdcd"/>
<clipPath id="chs"><path d="M616.4 29A8 8 0 0 1 616.4 42.4Q612.8 35.7 616.4 29Z M616.4 28.5H622V43H616.4Z"/></clipPath>
<clipPath id="chs2"><circle cx="615" cy="35.7" r="6.3"/></clipPath>
<g clip-path="url(#chs2)"><g clip-path="url(#chs)">
<rect x="614" y="29" width="8" height="14" fill="#fff"/>
<g fill="#141414">
<rect x="616.4" y="29.6" width="1.7" height="1.7"/><rect x="619.8" y="29.6" width="1.7" height="1.7"/>
<rect x="618.1" y="31.3" width="1.7" height="1.7"/>
<rect x="616.4" y="33" width="1.7" height="1.7"/><rect x="619.8" y="33" width="1.7" height="1.7"/>
<rect x="614.7" y="34.7" width="1.7" height="1.7"/><rect x="618.1" y="34.7" width="1.7" height="1.7"/>
<rect x="616.4" y="36.4" width="1.7" height="1.7"/><rect x="619.8" y="36.4" width="1.7" height="1.7"/>
<rect x="618.1" y="38.1" width="1.7" height="1.7"/>
<rect x="616.4" y="39.8" width="1.7" height="1.7"/><rect x="619.8" y="39.8" width="1.7" height="1.7"/>
</g></g></g>
<!-- textured cube -->
<path d="M634.4 30.6L638.2 32.6L634.4 34.6L630.6 32.6Z" fill="#6fd6e2"/>
<path d="M629.8 34.6L633 36.4V41.2L629.8 39.4Z" fill="#43b3c3"/>
<path d="M639 34.6L635.8 36.4V41.2L639 39.4Z" fill="#5fcad6"/>
<g fill="none" stroke="#d4d4d4" stroke-width="1.1" stroke-linejoin="round">
<path d="M634.4 29L640.9 32.4V40L634.4 43L628 40V32.4Z"/>
<path d="M634.4 35.8V43M634.4 35.8L628 32.4M634.4 35.8L640.9 32.4"/>
</g>
<!-- checker sphere -->
<clipPath id="ccs"><circle cx="653.1" cy="35.9" r="6.2"/></clipPath>
<g clip-path="url(#ccs)">
<rect x="646" y="29" width="14" height="14" fill="#f4f4f4"/>
<path d="M646.9 29.7h1.55v1.55h-1.55zM650 29.7h1.55v1.55H650zM653.1 29.7h1.55v1.55h-1.55zM656.2 29.7h1.55v1.55h-1.55zM648.45 31.25H650v1.55h-1.55zM651.55 31.25h1.55v1.55h-1.55zM654.65 31.25h1.55v1.55h-1.55zM657.75 31.25h1.55v1.55h-1.55zM646.9 32.8h1.55v1.55h-1.55zM650 32.8h1.55v1.55H650zM653.1 32.8h1.55v1.55h-1.55zM656.2 32.8h1.55v1.55h-1.55zM648.45 34.35H650v1.55h-1.55zM651.55 34.35h1.55v1.55h-1.55zM654.65 34.35h1.55v1.55h-1.55zM657.75 34.35h1.55v1.55h-1.55zM646.9 35.9h1.55v1.55h-1.55zM650 35.9h1.55v1.55H650zM653.1 35.9h1.55v1.55h-1.55zM656.2 35.9h1.55v1.55h-1.55zM648.45 37.45H650V39h-1.55zM651.55 37.45h1.55V39h-1.55zM654.65 37.45h1.55V39h-1.55zM657.75 37.45h1.55V39h-1.55zM646.9 39h1.55v1.55h-1.55zM650 39h1.55v1.55H650zM653.1 39h1.55v1.55h-1.55zM656.2 39h1.55v1.55h-1.55zM648.45 40.55H650v1.55h-1.55zM651.55 40.55h1.55v1.55h-1.55zM654.65 40.55h1.55v1.55h-1.55z" fill="#1c1c1c"/>
</g>
<!-- light bulb -->
<g fill="#c8c8c8">
<path d="M672 31.6A3.4 3.4 0 0 1 675.4 35C675.4 36.8 674 37.6 673.7 39.8H670.3C670 37.6 668.6 36.8 668.6 35A3.4 3.4 0 0 1 672 31.6Z"/>
<rect x="670.8" y="40.9" width="2.4" height="1.9"/>
<rect x="671.1" y="28.8" width="1.9" height="1.9"/>
<rect x="666.6" y="30.2" width="1.8" height="1.8" transform="rotate(45 667.5 31.1)"/>
<rect x="675.6" y="30.2" width="1.8" height="1.8" transform="rotate(45 676.5 31.1)"/>
<rect x="664.9" y="35" width="2" height="1.1"/><rect x="677.2" y="35" width="2" height="1.1"/>
</g>
</g>

<!-- script editor -->
<text x="729.8" y="27" font-size="13" fill="#8c8c8c" textLength="98.7" lengthAdjust="spacingAndGlyphs">スクリプト エディタ</text>
<text x="706.4" y="57.6" font-size="11" fill="#e6e6e6" textLength="33.5" lengthAdjust="spacingAndGlyphs">ファイル</text>
<text x="755" y="57.6" font-size="12" fill="#e6e6e6" textLength="23.9" lengthAdjust="spacingAndGlyphs">編集</text>
<text x="794.5" y="57.6" font-size="11" fill="#e6e6e6" textLength="31.5" lengthAdjust="spacingAndGlyphs">ヒストリ</text>
<text x="841" y="57.6" font-size="11" fill="#e6e6e6" textLength="34" lengthAdjust="spacingAndGlyphs">コマンド</text>
<text x="890.2" y="57.6" font-size="11" fill="#e6e6e6" textLength="29.2" lengthAdjust="spacingAndGlyphs">ヘルプ</text>
<g id="se-toolbar">
<!-- maya logo -->
<rect x="704.2" y="11.2" width="19.9" height="19.6" fill="#d6ecea"/>
<path d="M706.8 12.8H711L714.3 19.4L717.4 12.8H721.3V25.9H717.6V19.6L715.2 24.4H713.3L710.5 19.4V25.9H706.8Z" fill="#1f9296"/>
<path d="M706.8 12.8H710.6V25.9H706.8Z" fill="#0f757c"/>
<path d="M710.6 12.8H711L714.3 19.4L713.6 23.4L710.5 19.4Z" fill="#6cbcbb"/>
<path d="M717.6 19.6L721.3 12.8V25.9H717.6Z" fill="#148a90"/>
<rect x="712" y="27.4" width="8.8" height="1.7" fill="#55b5b3"/>
<!-- separators -->
<g fill="#2b2b2b">
<rect x="809" y="67" width="1" height="22"/><rect x="897" y="67" width="1" height="22"/>
<rect x="985" y="67" width="1" height="22"/><rect x="1046" y="67" width="1" height="22"/><rect x="1107" y="67" width="1" height="22"/>
</g>
<!-- open -->
<g id="ic-open">
<path d="M702.8 71.2H706.8V83.8H703.6Q702.8 83.8 702.8 83Z" fill="#bdbdbd"/>
<rect x="707" y="68.7" width="10.4" height="7.4" fill="#42b8c6" stroke="#333" stroke-width="0.5"/>
<path d="M708.6 72.2H715.8M708.6 74.6H715.8" stroke="#2e3a3d" stroke-width="0.8"/>
<path d="M706 76.4H712.4L713.7 74.7H720.2L718 83.9H703.8Z" fill="#cfcfcf" stroke="#3a3a3a" stroke-width="0.4"/>
</g>
<!-- open + run -->
<g transform="translate(27 0)">
<path d="M702.8 71.2H706.8V83.8H703.6Q702.8 83.8 702.8 83Z" fill="#bdbdbd"/>
<rect x="707" y="68.7" width="10.4" height="7.4" fill="#42b8c6" stroke="#333" stroke-width="0.5"/>
<path d="M708.6 72.2H715.8M708.6 74.6H715.8" stroke="#2e3a3d" stroke-width="0.8"/>
<path d="M706 76.4H712.4L713.7 74.7H720.2L718 83.9H703.8Z" fill="#cfcfcf" stroke="#3a3a3a" stroke-width="0.4"/>
</g>
<path d="M740.8 78.2L747.4 82.3L740.8 86.2Z" fill="#42b8c6" stroke="#444" stroke-width="0.6"/>
<!-- save -->
<path d="M758.6 69.4H771.4Q772.2 69.4 772.2 70.2V84H759.6L757.9 82.4V70.2Q757.9 69.4 758.6 69.4Z" fill="#cdcdcd"/>
<rect x="760.4" y="69.4" width="9.4" height="6.8" fill="#c2c2c2" stroke="#444" stroke-width="0.7"/>
<rect x="762" y="79" width="6.2" height="3.4" fill="#3a3a3a"/><rect x="762.6" y="79.6" width="1.8" height="2.2" fill="#e8e8e8"/>
<!-- save to shelf -->
<path d="M790.6 69.7H799.4Q800 69.7 800 70.3V79.2H790V70.3Q790 69.7 790.6 69.7Z" fill="#d2d2d2"/>
<rect x="792" y="69.7" width="5.8" height="3.6" fill="#c0c0c0" stroke="#555" stroke-width="0.5"/>
<rect x="793" y="75.2" width="4" height="2.6" fill="#3a3a3a"/><rect x="794" y="75.8" width="1.2" height="1.4" fill="#e8e8e8"/>
<path d="M783.7 78H788.6L790 79.4H800V84.2H783.7Z" fill="#42b8c6" stroke="#3a3a3a" stroke-width="0.4"/>
<g fill="#3a2a2a"><rect x="785" y="81.2" width="1.7" height="1.7"/><rect x="788.1" y="81.2" width="1.7" height="1.7"/><rect x="791.2" y="81.2" width="1.7" height="1.7"/><rect x="794.3" y="81.2" width="1.7" height="1.7"/></g>
<!-- clear history -->
<rect x="818.3" y="70.5" width="15.1" height="7" fill="#3a3a3a" stroke="#dcdcdc" stroke-width="1.1"/>
<rect x="820.2" y="72.2" width="11.2" height="3.6" fill="#42b8c6"/>
<path d="M818.5 78.6V83.8H833.3V78.6" fill="none" stroke="#dcdcdc" stroke-width="1" stroke-dasharray="1.7 1.3"/>
<path d="M827.6 68.6L834.4 75.4M834.4 68.6L827.6 75.4" stroke="#444" stroke-width="3.2"/>
<path d="M827.8 68.8L834.2 75.2M834.2 68.8L827.8 75.2" stroke="#d4d4d4" stroke-width="1.9"/>
<!-- clear input -->
<path d="M845.4 76V70.6H860.8V76" fill="none" stroke="#dcdcdc" stroke-width="1" stroke-dasharray="1.7 1.3"/>
<rect x="845.2" y="76.6" width="15.7" height="7" fill="#3a3a3a" stroke="#dcdcdc" stroke-width="1.1"/>
<rect x="847.1" y="78.3" width="11.8" height="3.6" fill="#42b8c6"/>
<path d="M854.4 78.4L861.6 85.6M861.6 78.4L854.4 85.6" stroke="#444" stroke-width="3.2"/>
<path d="M854.6 78.6L861.4 85.4M861.4 78.6L854.6 85.4" stroke="#d4d4d4" stroke-width="1.9"/>
<!-- clear all -->
<rect x="872.3" y="70.5" width="15.4" height="13.1" fill="#3a3a3a" stroke="#dcdcdc" stroke-width="1.1"/>
<rect x="874.2" y="72.1" width="11.6" height="3.3" fill="#42b8c6"/><rect x="874.2" y="78.7" width="11.6" height="3.3" fill="#42b8c6"/>
<path d="M872.3 77.05H887.7" stroke="#dcdcdc" stroke-width="1.1"/>
<path d="M881.2 73.4L888.4 80.6M888.4 73.4L881.2 80.6" stroke="#444" stroke-width="3.2"/>
<path d="M881.4 73.6L888.2 80.4M888.2 73.6L881.4 80.4" stroke="#d4d4d4" stroke-width="1.9"/>
<!-- show history -->
<rect x="906.5" y="70.4" width="15.1" height="7" fill="#3a3a3a" stroke="#dcdcdc" stroke-width="1.1"/>
<rect x="908.3" y="72" width="11.5" height="3.8" fill="#42b8c6"/>
<path d="M906.7 78.6V83.8H921.5V78.6" fill="none" stroke="#dcdcdc" stroke-width="1" stroke-dasharray="1.7 1.3"/>
<!-- show input -->
<path d="M933.5 76.2V70.6H948.6V76.2" fill="none" stroke="#dcdcdc" stroke-width="1" stroke-dasharray="1.7 1.3"/>
<rect x="933.3" y="76.8" width="15.4" height="6.9" fill="#3a3a3a" stroke="#dcdcdc" stroke-width="1.1"/>
<rect x="935.2" y="78.4" width="11.6" height="3.7" fill="#42b8c6"/>
<!-- show both -->
<rect x="960.3" y="70.3" width="15.5" height="13.6" fill="#3a3a3a" stroke="#dcdcdc" stroke-width="1.1"/>
<rect x="962.2" y="72" width="11.7" height="3.3" fill="#42b8c6"/><rect x="962.2" y="78.8" width="11.7" height="3.3" fill="#42b8c6"/>
<path d="M960.3 77.05H975.8" stroke="#dcdcdc" stroke-width="1.3"/>
<!-- echo all -->
<rect x="994.4" y="70.4" width="15.3" height="10.2" fill="#3a3a3a" stroke="#dcdcdc" stroke-width="1.1"/>
<rect x="996.2" y="72.1" width="11.7" height="6.8" fill="#42b8c6"/>
<path d="M998.6 77.4L1000 73.4M1000.4 77.4L1001.8 73.4" stroke="#2c4a50" stroke-width="0.7"/>
<path d="M1002.4 77.3h0.9M1004.2 77.3h0.9M1006 77.3h0.9" stroke="#2c4a50" stroke-width="0.9"/>
<path d="M1004.8 78.8L1011.4 82.4L1004.8 86.2Z" fill="#42b8c6" stroke="#444" stroke-width="0.7"/>
<!-- line numbers (on) -->
<rect x="1018" y="66" width="23" height="23" rx="1.5" fill="#5a8fb6"/>
<g stroke="#2d3a40" stroke-width="0.7" fill="#45c0cc">
<rect x="1025.4" y="69.3" width="12" height="3.2" rx="0.6"/><rect x="1025.4" y="75.3" width="12" height="3.2" rx="0.6"/><rect x="1025.4" y="81.4" width="12" height="3.2" rx="0.6"/>
</g>
<g fill="none" stroke="#333" stroke-width="2.2"><path d="M1021.6 69.6L1022.8 68.8V72.9"/><path d="M1021.2 75.5Q1022.4 74.4 1023.4 75.4Q1023.8 76.4 1021.2 78.6H1023.8"/><path d="M1021.2 81.2H1023.4L1022.3 82.6Q1023.8 82.8 1023.4 84Q1022.6 85 1021.2 84.3"/></g>
<g fill="none" stroke="#f2f2f2" stroke-width="1.1"><path d="M1021.6 69.6L1022.8 68.8V72.9"/><path d="M1021.2 75.5Q1022.4 74.4 1023.4 75.4Q1023.8 76.4 1021.2 78.6H1023.8"/><path d="M1021.2 81.2H1023.4L1022.3 82.6Q1023.8 82.8 1023.4 84Q1022.6 85 1021.2 84.3"/></g>
<!-- execute all / execute -->
<path d="M1062.9 68.9L1070.2 73.4L1062.9 77.8Z" fill="#42b8c6"/>
<path d="M1056.9 76.3L1064.1 80.5L1056.9 85Z" fill="#42b8c6" stroke="#444" stroke-width="0.6"/>
<path d="M1084.7 69.8L1095.8 76.8L1084.7 84.1Z" fill="#42b8c6"/>
</g>

<path d="M918 227.5H1136" stroke="#9a9a9a" stroke-width="1" stroke-dasharray="1.2 1.8"/>
<rect x="692.9" y="32" width="2.1" height="8" fill="#808080"/><rect x="693.6" y="40" width="1" height="5.6" fill="#666"/>
<path d="M686.5 243V457" stroke="#969696" stroke-width="1" stroke-dasharray="1 2"/>
<rect x="690" y="227.6" width="5" height="1.4" fill="#383838"/>
</svg>
</body>
</html>
